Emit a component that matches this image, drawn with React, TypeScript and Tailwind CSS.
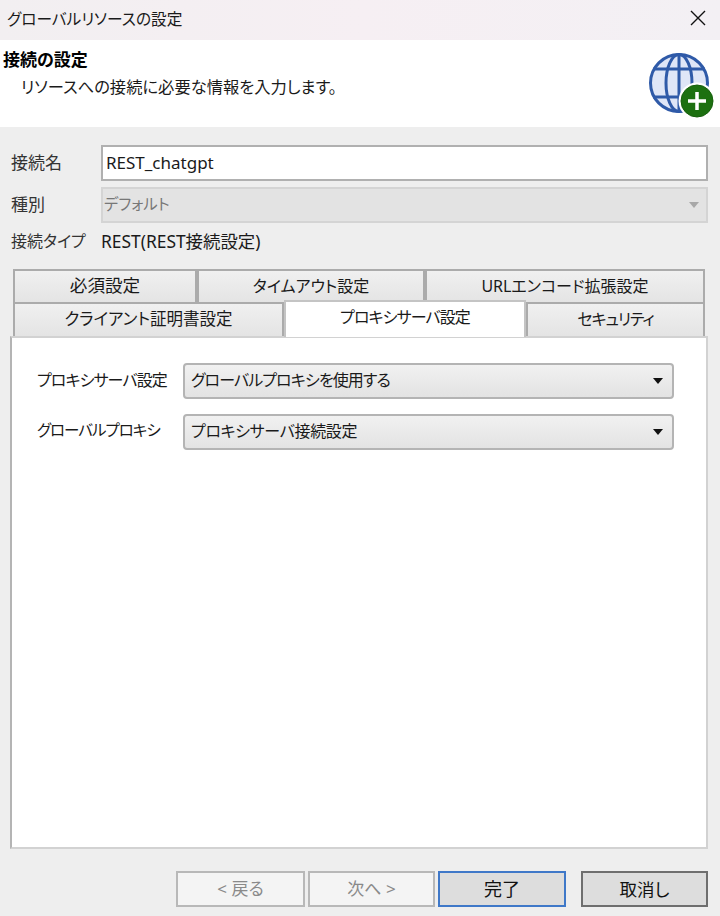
import type { ReactNode } from 'react'

const font = "[font-family:'Noto_Sans','Noto_Sans_CJK_JP',sans-serif] [font-feature-settings:'palt']"

function GlobeIcon() {
  return (
    <svg width="68" height="68" viewBox="0 0 68 68" fill="none">
      <circle cx="31" cy="31" r="28.5" fill="#dfe6f7" stroke="#2f5aa8" strokeWidth="3" />
      <ellipse cx="31" cy="31" rx="13" ry="28.5" stroke="#2f5aa8" strokeWidth="3" />
      <path d="M31 3v56M5 17h52M5 45h52" stroke="#2f5aa8" strokeWidth="3" />
      <circle cx="49" cy="49" r="18.5" fill="#fff" />
      <circle cx="49" cy="49" r="16" fill="#1c7010" stroke="#17600d" strokeWidth="1" />
      <path d="M49 40v18M40 49h18" stroke="#fff" strokeWidth="3.5" />
    </svg>
  )
}

function Tab({ children, className }: { children: ReactNode; className: string }) {
  return (
    <div className={`h-full flex items-center justify-center pb-[2px] border-2 border-b-0 border-[#ababab] bg-gradient-to-b from-[#f0f0f0] to-[#e4e4e4] text-[#1a1a1a] ${className}`}>
      {children}
    </div>
  )
}

function ComboBox({ label, className }: { label: string; className: string }) {
  return (
    <div className="flex-1 h-[36px] flex items-center justify-between pl-[6px] pr-[9px] rounded-[4px] border-2 border-[#b4b4b4] bg-gradient-to-b from-[#f1f1f1] to-[#e3e3e3] text-[#1a1a1a]">
      <span className={`pb-[3px] ${className}`}>{label}</span>
      <span className="w-0 h-0 border-x-[5px] border-x-transparent border-t-[6px] border-t-[#111]" />
    </div>
  )
}

function WizardButton({ label, className }: { label: string; className: string }) {
  return (
    <button type="button" className={`h-[36px] border-2 ${className}`}>
      {label}
    </button>
  )
}

export default function App() {
  return (
    <div className={`w-[720px] h-[916px] flex flex-col overflow-hidden bg-[#eeeeee] text-[#1a1a1a] ${font}`}>
      <div className="h-[40px] flex items-center justify-between pl-[7px] pr-[13px] bg-gradient-to-r from-[#f2eff1] via-[#f6eff3] to-[#f3f0f4] text-[15.7px]">
        <span>グローバルリソースの設定</span>
        <svg width="18" height="18" viewBox="0 0 18 18" className="mb-[4px]">
          <path d="M2 2l14 14M16 2L2 16" stroke="#111" strokeWidth="1.4" />
        </svg>
      </div>

      <div className="h-[87px] flex justify-between bg-white pl-[3px] pr-[4px]">
        <div className="pt-[9px]">
          <div className="text-[17px] font-bold leading-[22px] text-black">接続の設定</div>
          <div className="pl-[18px] pt-[4px] text-[16.3px] leading-[24px]">リソースへの接続に必要な情報を入力します。</div>
        </div>
        <div className="pt-[12px]">
          <GlobeIcon />
        </div>
      </div>

      <div className="flex-1 flex flex-col pl-[10px] pr-[12px] pt-[18px] pb-[9px]">
        <div className="flex flex-col pl-[1px]">
          <div className="flex items-center h-[36px]">
            <span className="w-[90px] text-[17px] text-[#333]">接続名</span>
            <div className="flex-1 h-full flex items-center pl-[3px] bg-white border-2 border-[#b0b0b0] text-[17px]">REST_chatgpt</div>
          </div>
          <div className="flex items-center h-[36px] mt-[6px]">
            <span className="w-[90px] text-[17px] text-[#333]">種別</span>
            <div className="flex-1 h-full flex items-center justify-between pl-[1px] pr-[7px] bg-[#e3e3e3] border-2 border-[#d4d4d4] text-[15.4px] text-[#777]">
              <span>デフォルト</span>
              <span className="w-0 h-0 border-x-[5px] border-x-transparent border-t-[6px] border-t-[#a8a8a8]" />
            </div>
          </div>
          <div className="flex items-center h-[24px] mt-[6px]">
            <span className="w-[90px] text-[16px] text-[#333]">接続タイプ</span>
            <span className="text-[17.4px]">REST(REST接続設定)</span>
          </div>
        </div>

        <div className="mt-[16px] h-[33px] flex pl-[3px] pr-[3px]">
          <Tab className="w-[184px] text-[17.6px]">必須設定</Tab>
          <Tab className="w-[228px] text-[16px]">タイムアウト設定</Tab>
          <Tab className="flex-1 text-[16px]">URLエンコード拡張設定</Tab>
        </div>
        <div className="h-[34px] flex items-end pl-[3px] pr-[3px]">
          <Tab className="w-[271px] text-[16.5px]">クライアント証明書設定</Tab>
          <div className="w-[242px] h-[37px] flex items-center justify-center pb-[5px] bg-white border-2 border-b-0 border-[#c4c4c4] text-[16px] tracking-[-0.9px] relative z-10 -mb-[1px]">
            プロキシサーバ設定
          </div>
          <Tab className="flex-1 text-[16px] tracking-[-1.1px]">セキュリティ</Tab>
        </div>

        <div className="flex-1 bg-white border-2 border-[#d2d2d2] border-l-[#b4b4b4] pt-[25px] pl-[25px] pr-[32px]">
          <div className="flex items-center">
            <span className="w-[146px] pb-[2px] text-[16px] tracking-[-0.9px]">プロキシサーバ設定</span>
            <ComboBox label="グローバルプロキシを使用する" className="text-[16px] tracking-[-0.9px]" />
          </div>
          <div className="flex items-center mt-[15px]">
            <span className="w-[146px] pb-[2px] text-[15.5px] tracking-[-1px]">グローバルプロキシ</span>
            <ComboBox label="プロキシサーバ接続設定" className="text-[16px] tracking-[-0.35px]" />
          </div>
        </div>

        <div className="mt-[22px] flex pl-[166px]">
          <WizardButton label="< 戻る" className="w-[129px] bg-[#f4f4f4] border-[#b8b8b8] text-[17px] text-[#8a8a8a]" />
          <WizardButton label="次へ >" className="w-[127px] ml-[3px] bg-[#f4f4f4] border-[#b8b8b8] text-[17px] text-[#8a8a8a]" />
          <WizardButton label="完了" className="w-[128px] ml-[3px] bg-[#dddddd] border-[#3f78c8] text-[18px] text-[#111]" />
          <WizardButton label="取消し" className="w-[127px] ml-[15px] bg-[#dddddd] border-[#6e6e6e] text-[17.5px] text-[#111]" />
        </div>
      </div>
    </div>
  )
}
